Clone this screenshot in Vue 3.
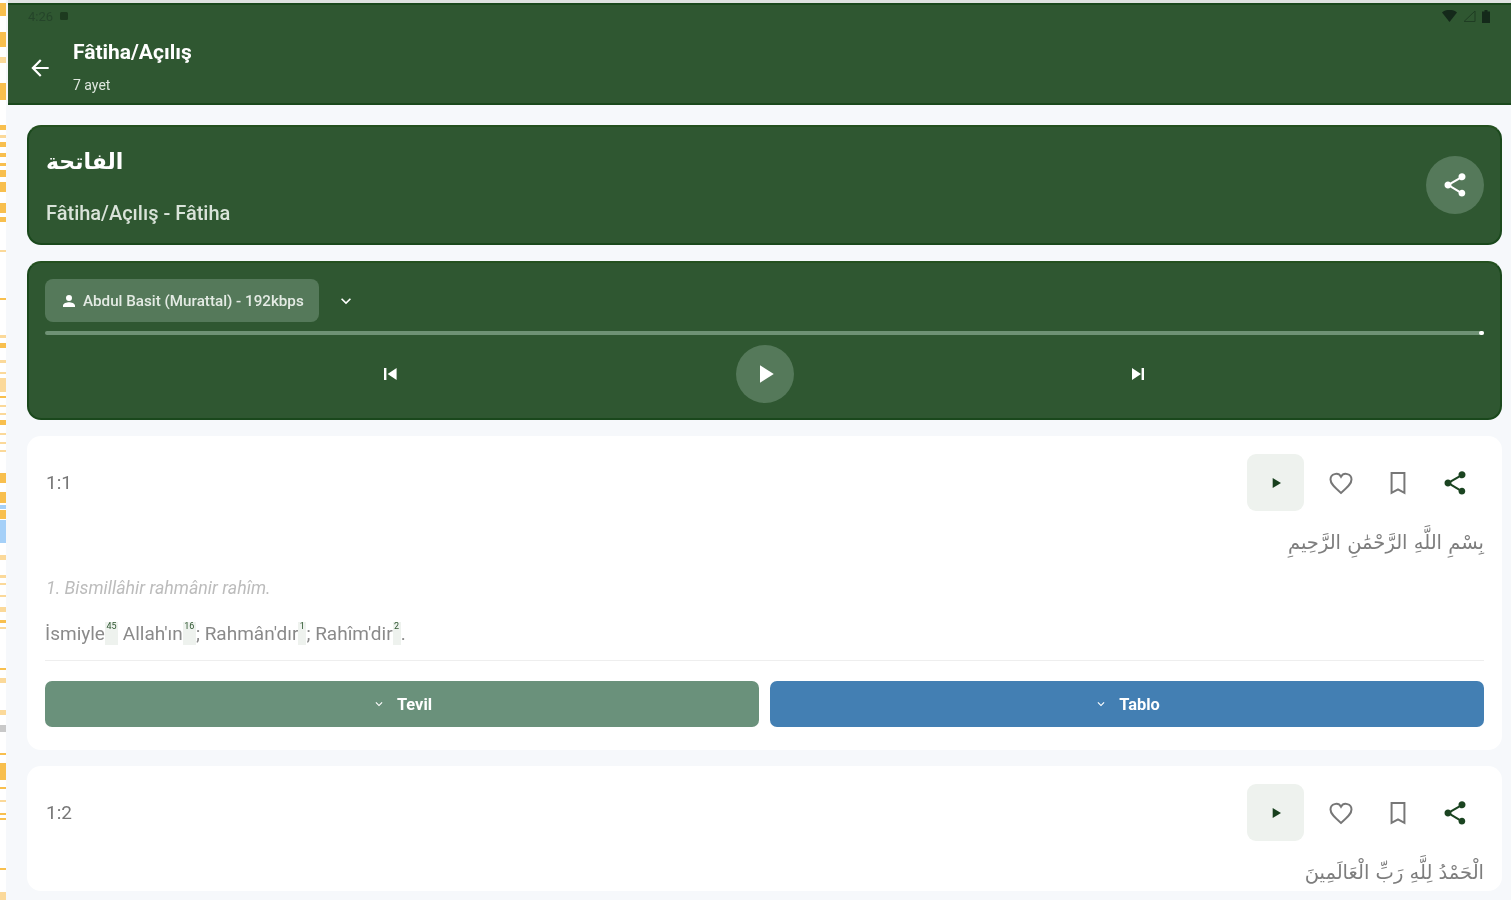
<template>
  <div class="page">
    <div class="strip">
      <i v-for="(m, n) in marks" :key="n" :style="{ height: m.h + 'px', marginTop: m.gap + 'px', background: m.c }"></i>
    </div>
    <div class="main">
      <header class="appbar">
        <div class="status">
          <div class="status-left">
            <span>4:26</span>
            <svg width="10" height="10" viewBox="0 0 10 10"><rect x="1" y="1" width="8" height="8" rx="1.5" fill="#1d3a1f" /></svg>
          </div>
          <div class="status-right">
            <svg width="15" height="12" viewBox="0 0 15 12"><path d="M0 2.500C4-1 11-1 15 2.500L7.500 12z" fill="#14291a" /></svg>
            <svg width="13" height="12" viewBox="0 0 13 12"><path d="M1 11.500 12 1v10.500z" fill="none" stroke="#1f3d23" stroke-width="1" /></svg>
            <svg width="8" height="13" viewBox="0 0 8 13"><path d="M2.500 0h3v1.500H8V13H0V1.500h2.500z" fill="#14291a" /></svg>
          </div>
        </div>
        <div class="bar-row">
          <svg class="back" width="26" height="26" viewBox="0 0 24 24"><path d="M20 11H7.800l5.600-5.600L12 4l-8 8 8 8 1.400-1.400L7.800 13H20z" fill="#fff" /></svg>
          <div class="bar-titles">
            <div class="bar-title">Fâtiha/Açılış</div>
            <div class="bar-sub">7 ayet</div>
          </div>
        </div>
      </header>

      <div class="content">
        <section class="green-card head-card">
          <div>
            <div class="sura-ar" dir="rtl">الفاتحة</div>
            <div class="sura-tr">Fâtiha/Açılış - Fâtiha</div>
          </div>
          <button class="round">
            <svg width="28" height="28" viewBox="0 0 24 24"><path :d="sharePath" fill="#fff" /></svg>
          </button>
        </section>

        <section class="green-card player">
          <div class="reciter-row">
            <div class="chip">
              <svg width="16" height="16" viewBox="0 0 24 24"><path d="M12 12a4.500 4.500 0 1 0 0-9 4.500 4.500 0 0 0 0 9zm0 2c-3.300 0-9 1.700-9 5v2h18v-2c0-3.300-5.700-5-9-5z" fill="#fff" /></svg>
              <span>Abdul Basit (Murattal) - 192kbps</span>
            </div>
            <svg class="chev" width="20" height="20" viewBox="0 0 24 24"><path d="M7.400 8.600 12 13.200l4.600-4.600L18 10l-6 6-6-6z" fill="#fff" /></svg>
          </div>
          <div class="slider"><span class="thumb"></span></div>
          <div class="controls">
            <svg class="prev" width="24" height="24" viewBox="0 0 24 24"><path d="M6 6h2.400v12H6zm3.600 6 9 6V6z" fill="#fff" /></svg>
            <button class="round">
              <svg width="30" height="30" viewBox="0 0 24 24"><path d="M8 5v14l11-7z" fill="#fff" /></svg>
            </button>
            <svg class="next" width="24" height="24" viewBox="0 0 24 24"><path d="M6 18l9-6-9-6zM15.600 6H18v12h-2.400z" fill="#fff" /></svg>
          </div>
        </section>

        <section v-for="v in verses" :key="v.no" class="verse" :class="{ short: !v.translit }">
          <div class="verse-top">
            <span class="verse-no">{{ v.no }}</span>
            <div class="verse-actions">
              <button class="play-small">
                <svg width="20" height="20" viewBox="0 0 24 24"><path d="M8 6v12l10-6z" fill="#173f1d" /></svg>
              </button>
              <span class="act">
                <svg width="28" height="28" viewBox="0 0 24 24"><path d="M12 20.500C5.500 15 3 12.300 3 9a4.800 4.800 0 0 1 9-2.300A4.800 4.800 0 0 1 21 9c0 3.300-2.500 6-9 11.500z" fill="none" stroke="#777" stroke-width="1.700" /></svg>
              </span>
              <span class="act">
                <svg width="28" height="28" viewBox="0 0 24 24"><path d="M6.500 3.500h11v17L12 17.500l-5.500 3z" fill="none" stroke="#777" stroke-width="1.700" /></svg>
              </span>
              <span class="act">
                <svg width="28" height="28" viewBox="0 0 24 24"><path :d="sharePath" fill="#1b4421" /></svg>
              </span>
            </div>
          </div>
          <div class="verse-ar" dir="rtl">{{ v.ar }}</div>
          <template v-if="v.translit">
            <div class="translit">{{ v.translit }}</div>
            <div class="meaning">
              <template v-for="p in v.parts" :key="p.t">{{ p.t }}<span class="note">{{ p.n }}</span>{{ p.after }}</template>
            </div>
            <div class="rule"></div>
            <div class="verse-btns">
              <button class="wide tevil">
                <svg width="14" height="14" viewBox="0 0 24 24"><path d="M7.400 8.600 12 13.200l4.600-4.600L18 10l-6 6-6-6z" fill="#fff" /></svg>
                Tevil
              </button>
              <button class="wide tablo">
                <svg width="14" height="14" viewBox="0 0 24 24"><path d="M7.400 8.600 12 13.200l4.600-4.600L18 10l-6 6-6-6z" fill="#fff" /></svg>
                Tablo
              </button>
            </div>
          </template>
        </section>
      </div>
    </div>
  </div>
</template>

<script setup>
const sharePath =
  'M18 16.100c-.8 0-1.500.3-2 .8l-7.100-4.200c.1-.2.1-.5.1-.7s0-.5-.1-.7L16 7.200c.5.5 1.200.8 2 .8 1.700 0 3-1.300 3-3s-1.300-3-3-3-3 1.300-3 3c0 .2 0 .5.100.7L8 9.800C7.500 9.300 6.800 9 6 9c-1.700 0-3 1.300-3 3s1.300 3 3 3c.8 0 1.500-.3 2-.8l7.100 4.200c-.1.200-.1.400-.1.600 0 1.600 1.300 2.900 2.900 2.900s2.900-1.300 2.900-2.900-1.200-2.900-2.800-2.900z'

const O = '#f8bf4e'
const L = '#fbd99a'
const B = '#a5d0f8'
// kenar seridi: [ust, yukseklik, renk]
const raw = [
  [3, 13, O], [32, 15, O], [57, 6, L], [83, 17, O], [125, 5, O], [135, 3, L], [142, 5, O], [153, 4, O],
  [163, 3, O], [170, 7, O], [182, 10, O], [203, 10, O], [217, 5, O], [250, 2, L], [298, 2, O], [335, 3, L],
  [343, 5, O], [360, 3, L], [372, 2, L], [378, 14, L], [396, 2, O], [405, 2, L], [413, 2, L], [420, 5, O],
  [433, 2, L], [442, 2, L], [450, 2, L], [473, 10, O], [492, 11, O], [505, 4, B], [510, 9, O], [520, 23, B],
  [555, 5, L], [575, 3, L], [583, 2, L], [595, 2, L], [607, 5, L], [620, 3, O], [627, 2, L], [668, 2, O],
  [678, 5, L], [710, 5, L], [725, 7, '#c9c9c9'], [753, 2, O], [763, 17, O], [787, 2, O], [800, 2, L],
  [813, 2, O], [818, 2, O], [868, 2, O], [892, 8, L],
]
const marks = raw.map((m, n) => ({
  gap: n ? m[0] - raw[n - 1][0] - raw[n - 1][1] : m[0],
  h: m[1],
  c: m[2],
}))

const verses = [
  {
    no: '1:1',
    ar: 'بِسْمِ اللَّهِ الرَّحْمَٰنِ الرَّحِيمِ',
    translit: '1. Bismillâhir rahmânir rahîm.',
    parts: [
      { t: 'İsmiyle', n: '45', after: ' ' },
      { t: "Allah'ın", n: '16', after: '; ' },
      { t: "Rahmân'dır", n: '1', after: '; ' },
      { t: "Rahîm'dir", n: '2', after: '.' },
    ],
  },
  { no: '1:2', ar: 'الْحَمْدُ لِلَّهِ رَبِّ الْعَالَمِينَ' },
]
</script>

<style>
html,
body {
  margin: 0;
  background: #f6f8fb;
}
</style>

<style scoped>
.page {
  display: flex;
  width: 1511px;
  height: 900px;
  overflow: hidden;
  background: #f6f8fb;
  font-family: Roboto, "Liberation Sans", sans-serif;
  filter: blur(0.7px);
}
.strip {
  width: 6px;
  margin-right: 2px;
  flex: none;
  background: #fff;
  display: flex;
  flex-direction: column;
}
.strip i {
  display: block;
  width: 6px;
  flex: none;
}
.main {
  flex: 1;
  min-width: 0;
  border-top: 3px solid #dfe2e0;
}
.appbar {
  height: 102px;
  box-sizing: border-box;
  background: #2f5731;
  border-top: 2px solid #1a481c;
  border-bottom: 2px solid #1a481c;
  color: #fff;
}
.status {
  height: 22px;
  display: flex;
  justify-content: space-between;
  align-items: center;
  padding: 0 21px 0 20px;
}
.status-left,
.status-right {
  display: flex;
  align-items: center;
  gap: 6px;
  color: #25452a;
  font-size: 13px;
}
.bar-row {
  display: flex;
  align-items: center;
  padding-left: 19px;
}
.back {
  margin-top: 16px;
}
.bar-titles {
  margin-left: 20px;
}
.bar-title {
  font-size: 21px;
  font-weight: 700;
  line-height: 24px;
  margin-top: 13px;
}
.bar-sub {
  font-size: 14px;
  line-height: 16px;
  margin-top: 13px;
  color: #dfe8df;
}
.content {
  padding: 20px 9px 0 19px;
  display: flex;
  flex-direction: column;
  gap: 16px;
}
.green-card {
  box-sizing: border-box;
  background: #2f5731;
  border: 2px solid #1a481c;
  border-top-color: #24501f;
  border-radius: 14px;
  color: #fff;
}
.head-card {
  height: 120px;
  display: flex;
  align-items: center;
  justify-content: space-between;
  padding: 0 16px 0 17px;
}
.sura-ar {
  font-family: "DejaVu Sans", sans-serif;
  font-size: 22px;
  font-weight: 700;
  line-height: 32px;
  width: fit-content;
}
.sura-tr {
  font-size: 20px;
  font-weight: 500;
  line-height: 22px;
  margin-top: 24px;
  color: #d9e3d9;
}
.round {
  width: 58px;
  height: 58px;
  border: 0;
  padding: 0;
  border-radius: 50%;
  background: #55795a;
  display: flex;
  align-items: center;
  justify-content: center;
}
.player {
  height: 159px;
  padding: 16px 16px 0;
}
.reciter-row {
  display: flex;
  align-items: center;
  gap: 17px;
}
.chip {
  height: 43px;
  width: 274px;
  box-sizing: border-box;
  padding-left: 16px;
  border-radius: 8px;
  background: #55795a;
  display: flex;
  align-items: center;
  gap: 6px;
  font-size: 15.2px;
  font-weight: 500;
  color: #e4ebe4;
  white-space: nowrap;
}
.slider {
  position: relative;
  height: 4px;
  margin-top: 9px;
  border-radius: 2px;
  background: #6f9275;
}
.thumb {
  position: absolute;
  right: 0;
  top: 0;
  width: 5px;
  height: 4px;
  border-radius: 2px;
  background: #fff;
}
.controls {
  margin-top: 10px;
  display: grid;
  grid-template-columns: 1fr auto 1fr;
  align-items: center;
  justify-items: center;
}
.prev {
  justify-self: start;
  margin-left: 333px;
}
.next {
  justify-self: end;
  margin-right: 334px;
}
.verse {
  box-sizing: border-box;
  background: #fff;
  border-radius: 14px;
  padding: 18px 18px 23px;
  color: #777;
}
.verse.short {
  height: 125px;
  padding-bottom: 0;
}
.verse-top {
  display: flex;
  justify-content: space-between;
  align-items: center;
}
.verse-no {
  font-size: 19px;
  margin-left: 1px;
  color: #777;
}
.verse-actions {
  display: flex;
  align-items: center;
  margin-right: 1px;
}
.play-small {
  width: 57px;
  height: 57px;
  margin-right: 8px;
  border: 0;
  padding: 0;
  border-radius: 9px;
  background: #eef2ee;
  display: flex;
  align-items: center;
  justify-content: center;
}
.act {
  width: 57px;
  height: 57px;
  display: flex;
  align-items: center;
  justify-content: center;
}
.verse-ar {
  font-family: "DejaVu Sans", sans-serif;
  font-size: 19.5px;
  line-height: 34px;
  margin-top: 15px;
  color: #7d7d7d;
}
.translit {
  font-size: 17.8px;
  font-style: italic;
  line-height: 20px;
  margin-top: 18px;
  color: #bcbcbc;
  margin-left: 1px;
}
.meaning {
  font-size: 19px;
  line-height: 26px;
  margin-top: 23px;
  color: #8a8a8a;
}
.note {
  display: inline-block;
  padding: 0 1.5px;
  height: 23px;
  margin-top: 1px;
  vertical-align: top;
  background: #eef2ee;
  line-height: 9px;
  font-size: 9px;
  text-align: center;
  color: #2f5731;
}
.rule {
  height: 1px;
  margin-top: 13px;
  background: #eeeeee;
}
.verse-btns {
  margin-top: 20px;
  display: flex;
  gap: 11px;
}
.wide {
  flex: 1;
  height: 46px;
  border: 0;
  border-radius: 7px;
  display: flex;
  align-items: center;
  justify-content: center;
  gap: 11px;
  color: #fff;
  font-family: inherit;
  font-size: 16.4px;
  font-weight: 700;
}
.tevil {
  background: #6a917b;
}
.tablo {
  background: #437fb3;
}
</style>
